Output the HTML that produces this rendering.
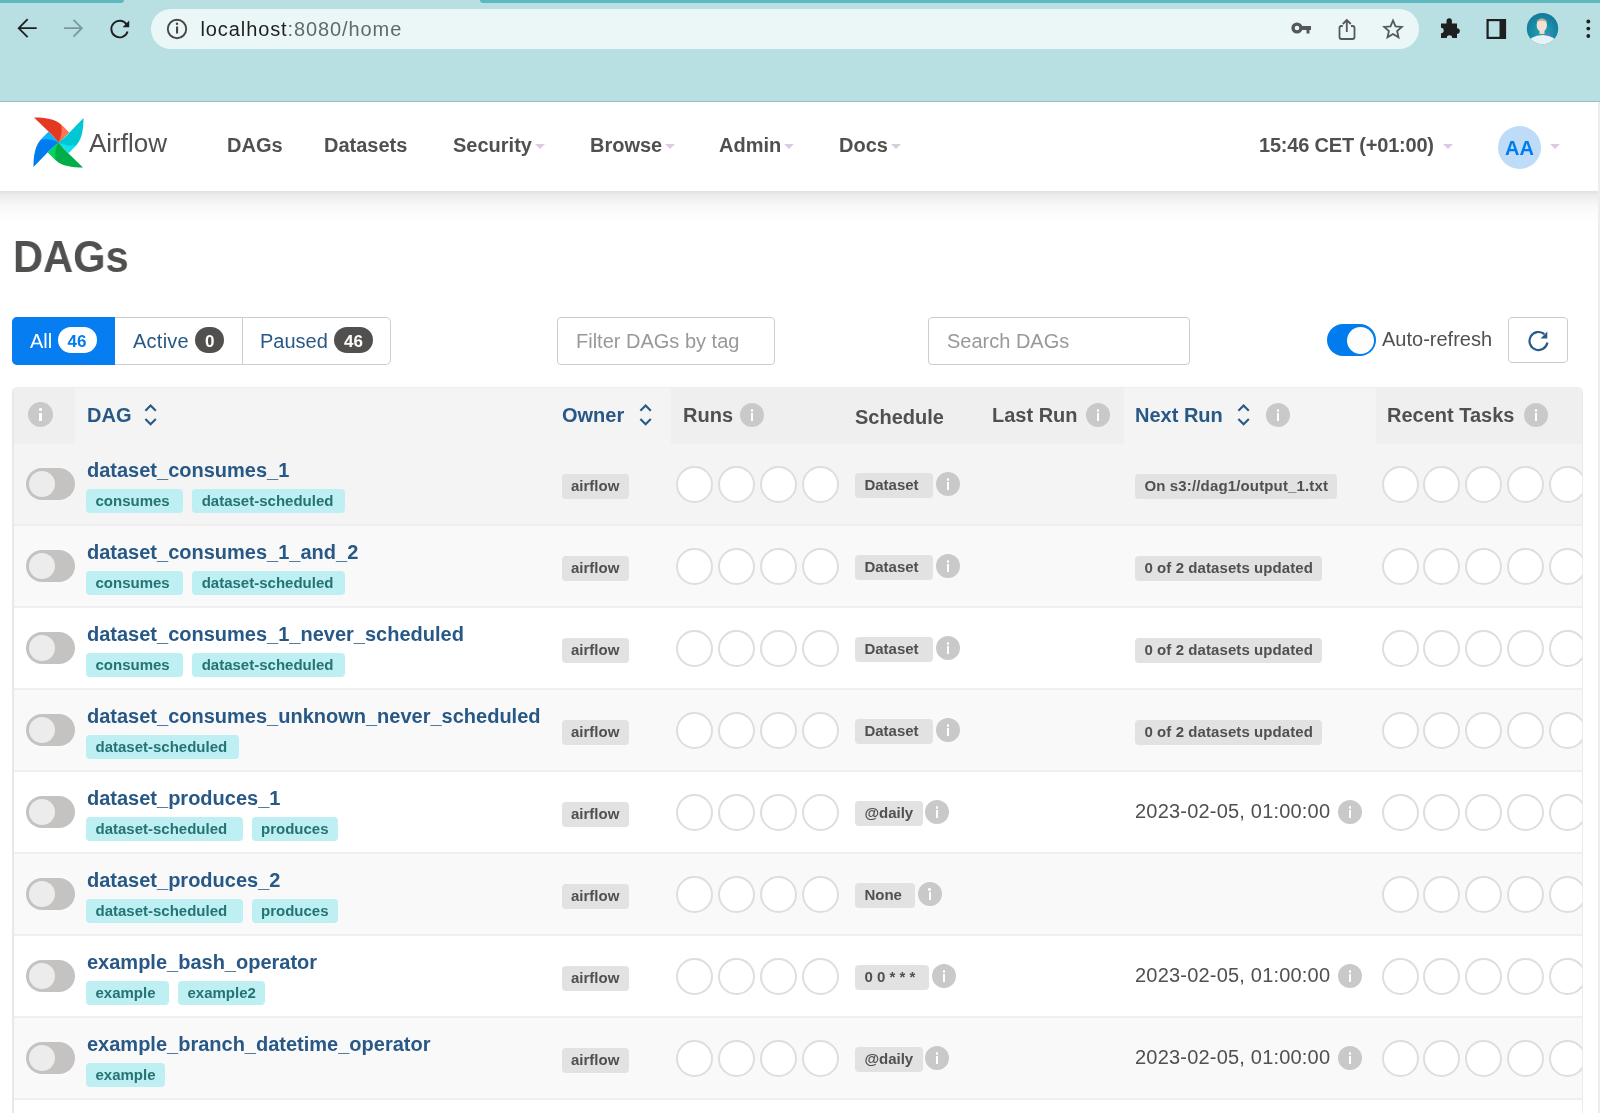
<!DOCTYPE html><html><head><meta charset="utf-8"><style>
*{margin:0;padding:0;box-sizing:border-box}
html,body{width:1600px;height:1113px;overflow:hidden;background:#fff;font-family:"Liberation Sans",sans-serif}
.a{position:absolute}
.t{position:absolute;white-space:nowrap;line-height:1}
.b{font-weight:bold}
.chrome{left:0;top:0;width:1600px;height:102px;background:#b8e0e2}
.strip{top:0;height:3px;background:#5db8c0}
.addr{left:151px;top:9px;width:1268px;height:40px;border-radius:20px;background:#ebf7f7}
.nav{left:0;top:102px;width:1598px;height:89px;background:#fff}
.shad{left:0;top:191px;width:1598px;height:32px;background:linear-gradient(#e1e1e1,#ebebeb 12%,#f3f3f3 30%,#f9f9f9 50%,#fcfcfc 70%,#fefefe 85%,#fff)}
.navt{font-size:20px;font-weight:bold;color:#51504f}
.caret{width:0;height:0;border-left:5.6px solid transparent;border-right:5.6px solid transparent;border-top:5.6px solid #dccbe0}
.info{border-radius:50%;background:#c9c9c9}
.info::after{content:"";position:absolute;left:50%;top:43%;width:2.2px;height:34%;margin-left:-1.1px;background:#fff;}
.info::before{content:"";position:absolute;left:50%;top:25%;width:2.6px;height:2.6px;margin-left:-1.3px;background:#fff;border-radius:50%}
.tag{position:absolute;height:24px;border-radius:4px;background:#bdeff3;color:#257373;font-size:15px;font-weight:bold;line-height:23px;padding-left:9.5px;white-space:nowrap}
.bdg{position:absolute;height:25px;border-radius:4px;background:#e2e2e2;color:#51504f;font-size:15px;font-weight:bold;line-height:25px;padding-left:9px;white-space:nowrap}
.circ{position:absolute;width:37px;height:37px;border-radius:50%;background:#fff;border:2px solid #dedede}
.tog{position:absolute;width:49px;height:32px;border-radius:16px;background:#c4c3c2}
.tog::after{content:"";position:absolute;left:3px;top:3px;width:26px;height:26px;border-radius:50%;background:#ececec}
.dag{font-size:20px;font-weight:bold;color:#285886}
.hdr{font-size:20px;font-weight:bold;color:#51504f}
.hdrs{color:#285886}
.dt{font-size:20px;color:#51504f}
</style></head><body><div style="position:absolute;left:0;top:0;width:1600px;height:1113px;overflow:hidden;will-change:transform"><div class="a chrome"></div>
<div class="a strip" style="left:0;width:124px;border-bottom-right-radius:3px"></div>
<div class="a strip" style="left:480px;width:1120px;border-bottom-left-radius:3px"></div>
<div class="a" style="left:0;top:101px;width:1600px;height:1px;background:#9dbfc1"></div>
<div class="a addr"></div>
<svg class="a" style="left:0;top:0" width="1600" height="60" viewBox="0 0 1600 60">
<g fill="none" stroke="#1f1f1f" stroke-width="1.8" stroke-linecap="square">
<path d="M35.8 28.2H19.5M27 19.8L18.7 28.2L27 36.6"/>
</g>
<g fill="none" stroke="#7c9899" stroke-width="1.8">
<path d="M64 28.2H81.5M73.5 19.8L81.8 28.2L73.5 36.6"/>
</g>
<g fill="none" stroke="#1f1f1f" stroke-width="1.9">
<path d="M126.8 24.8A8.3 8.3 0 1 0 127.6 31.5"/>
</g>
<path d="M129.2 20.6V27.2H122.6Z" fill="#1f1f1f"/>
<circle cx="177" cy="29" r="9.2" fill="none" stroke="#474747" stroke-width="1.9"/>
<rect x="176" y="26.5" width="2.1" height="7" fill="#474747"/><circle cx="177" cy="23.8" r="1.25" fill="#474747"/>
<g fill="#555759"><circle cx="1297" cy="28" r="5.6"/><rect x="1300" y="26" width="11" height="4"/><rect x="1306.5" y="28" width="3" height="5.5"/></g>
<circle cx="1297" cy="28" r="2.3" fill="#ebf7f7"/>
<g fill="none" stroke="#555759" stroke-width="1.8"><path d="M1342.8 26H1341.5A2 2 0 0 0 1339.5 28V37A2 2 0 0 0 1341.5 39H1352.5A2 2 0 0 0 1354.5 37V28A2 2 0 0 0 1352.5 26H1351"/><path d="M1346.8 32V20M1342.8 24L1346.8 20L1350.8 24"/></g>
<path d="M1393 20.5L1395.5 26.4L1401.8 26.9L1397.1 31.1L1398.5 37.3L1393 34L1387.5 37.3L1388.9 31.1L1384.2 26.9L1390.5 26.4Z" fill="none" stroke="#555759" stroke-width="1.8" stroke-linejoin="miter"/>
<path d="M1441 23.5H1446.5V21A2.7 2.7 0 0 1 1451.9 21V23.5H1457V28.2A2.8 2.8 0 0 1 1457 33.8V38H1452.2A2.7 2.7 0 0 0 1446.8 38H1441V33.2A2.7 2.7 0 0 0 1441 27.8Z" fill="#1f1f1f"/>
<rect x="1487.6" y="20.1" width="17.4" height="17.8" fill="none" stroke="#1f1f1f" stroke-width="2.2"/>
<rect x="1499.5" y="20" width="5.5" height="18" fill="#1f1f1f"/>
<defs><radialGradient id="avg" cx="0.5" cy="0.6" r="0.6"><stop offset="0" stop-color="#22a7b4"/><stop offset="1" stop-color="#12789a"/></radialGradient>
<clipPath id="avc"><circle cx="1542.5" cy="28.6" r="15.7"/></clipPath></defs>
<circle cx="1542.5" cy="28.6" r="15.7" fill="url(#avg)"/>
<g clip-path="url(#avc)">
<ellipse cx="1542.5" cy="44.5" rx="15" ry="9.5" fill="#e6f2f6"/><rect x="1539.5" y="29" width="5" height="5" fill="#f0d8c8"/>
<ellipse cx="1541.8" cy="25" rx="5.2" ry="6.6" fill="#f4e0d4"/>
<path d="M1536.6 22.5C1537 17.5 1546.5 17.5 1547 22.5C1545 20 1538.5 20 1536.6 22.5Z" fill="#c9a58d"/>
<circle cx="1548.5" cy="34.5" r="1.6" fill="#8a66d6"/>
</g>
<g fill="#1f1f1f"><circle cx="1588.3" cy="21.5" r="1.9"/><circle cx="1588.3" cy="28.6" r="1.9"/><circle cx="1588.3" cy="36" r="1.9"/></g>
</svg>
<div class="t" style="left:200.5px;top:19px;font-size:20px;letter-spacing:0.9px;color:#1f1f1f">localhost<span style="color:#5f6a6b">:8080/home</span></div>
<div class="a shad"></div>
<div class="a nav"></div>
<div class="a" style="left:1598.3px;top:102px;width:1.7px;height:1011px;background:#ededed"></div>
<svg class="a" style="left:33px;top:117px" width="52" height="51" viewBox="0 0 52 51">
<defs><g id="bl"><path d="M1 0.5C12 0.5 22 2 28 7.5L36 15.5L25.5 25.5C22 21 18 17 15.5 14.5Z" fill="var(--c1)"/>
<path d="M28 7.5L36 15.5L25.5 25.5C28.5 20 29.5 13 28 7.5Z" fill="var(--c2)"/></g></defs>
<use href="#bl" style="--c1:#e43921;--c2:#ff7557"/>
<use href="#bl" transform="rotate(90 25.5 25.5)" style="--c1:#00c7d4;--c2:#11e1ee"/>
<use href="#bl" transform="rotate(180 25.5 25.5)" style="--c1:#00ad46;--c2:#04d659"/>
<use href="#bl" transform="rotate(270 25.5 25.5)" style="--c1:#017cee;--c2:#0cb6ff"/>
</svg>
<div class="t" style="left:89px;top:130px;font-size:26px;color:#51504f">Airflow</div>
<div class="t navt" style="left:227px;top:135px">DAGs</div>
<div class="t navt" style="left:324px;top:135px">Datasets</div>
<div class="t navt" style="left:453px;top:135px">Security</div>
<div class="t navt" style="left:590px;top:135px">Browse</div>
<div class="t navt" style="left:719px;top:135px">Admin</div>
<div class="t navt" style="left:839px;top:135px">Docs</div>
<div class="a caret" style="left:535px;top:144px"></div>
<div class="a caret" style="left:665px;top:144px"></div>
<div class="a caret" style="left:784px;top:144px"></div>
<div class="a caret" style="left:891px;top:144px"></div>
<div class="t navt" style="left:1259px;top:135px;letter-spacing:-0.2px">15:46 CET (+01:00)</div>
<div class="a caret" style="left:1443.3px;top:144.4px"></div>
<div class="a" style="left:1498px;top:126px;width:43px;height:43px;border-radius:50%;background:#bedcf7"></div>
<div class="t b" style="left:1505px;top:137.5px;font-size:20px;color:#017cee">AA</div>
<div class="a caret" style="left:1549.7px;top:144.4px"></div>
<div class="t b" style="left:13px;top:234px;font-size:45px;color:#51504f;transform:scaleX(0.925);transform-origin:0 0">DAGs</div>
<div class="a" style="left:12px;top:317px;width:379px;height:48px;border:1.5px solid #cdcdcd;border-radius:5px"></div>
<div class="a" style="left:12px;top:317px;width:102.5px;height:48px;background:#067df0;border-radius:5px 0 0 5px"></div>
<div class="a" style="left:241.7px;top:317px;width:1.3px;height:48px;background:#cdcdcd"></div>
<div class="t" style="left:30px;top:331px;font-size:20px;color:#fff">All</div>
<div class="a" style="left:58px;top:327px;width:39px;height:26px;border-radius:13px;background:#fff"></div>
<div class="t b" style="left:67.5px;top:333px;font-size:17px;color:#017cee">46</div>
<div class="t" style="left:133px;top:331px;font-size:20px;letter-spacing:0.25px;color:#285886">Active</div>
<div class="a" style="left:195px;top:327px;width:29px;height:26px;border-radius:13px;background:#51504f"></div>
<div class="t b" style="left:205px;top:333px;font-size:17px;color:#fff">0</div>
<div class="t" style="left:260px;top:331px;font-size:20px;color:#285886">Paused</div>
<div class="a" style="left:334px;top:327px;width:39px;height:26px;border-radius:13px;background:#51504f"></div>
<div class="t b" style="left:344px;top:333px;font-size:17px;color:#fff">46</div>
<div class="a" style="left:557px;top:317px;width:218px;height:48px;border:1.5px solid #cdcdcd;border-radius:4px"></div>
<div class="t" style="left:576px;top:331px;font-size:20px;color:#999">Filter DAGs by tag</div>
<div class="a" style="left:928px;top:317px;width:262px;height:48px;border:1.5px solid #cdcdcd;border-radius:4px"></div>
<div class="t" style="left:947px;top:331px;font-size:20px;color:#999">Search DAGs</div>
<div class="a" style="left:1327px;top:324px;width:49px;height:32px;border-radius:16px;background:#017cee"></div>
<div class="a" style="left:1347px;top:326.5px;width:27px;height:27px;border-radius:50%;background:#fdfdfd"></div>
<div class="t" style="left:1382px;top:329px;font-size:20px;color:#51504f">Auto-refresh</div>
<div class="a" style="left:1508px;top:317px;width:60px;height:46px;border:1.5px solid #cdcdcd;border-radius:4px"></div>
<svg class="a" style="left:1526px;top:328px" width="24" height="24" viewBox="0 0 24 24"><path d="M18.3 6.1A9 9 0 1 0 21.4 14.5" fill="none" stroke="#2a5a88" stroke-width="2.2"/><path d="M21.3 3.6V10.4H14.5Z" fill="#2a5a88"/></svg>
<div class="a" style="left:12px;top:386.5px;width:1571px;height:727px;overflow:hidden;border-radius:5px 5px 0 0;background:#fff;border-left:2px solid #e8e8e8;border-top:1px solid #ededed">
<div class="a" style="left:-14px;top:-387.5px;width:1600px;height:1113px">
<div class="a" style="left:14px;top:387.5px;width:1568px;height:56px;background:#f4f4f4"></div>
<div class="a" style="left:14px;top:387.5px;width:61px;height:56px;background:#efefef"></div>
<div class="a" style="left:671px;top:387.5px;width:453px;height:56px;background:#efefef"></div>
<div class="a" style="left:1376px;top:387.5px;width:206px;height:56px;background:#efefef"></div>
<div class="a info" style="left:28px;top:402px;width:25px;height:25px"></div>
<div class="t hdr hdrs" style="left:87px;top:404.5px">DAG</div>
<div class="t hdr hdrs" style="left:562px;top:404.5px">Owner</div>
<div class="t hdr" style="left:683px;top:404.5px">Runs</div>
<div class="a info" style="left:740px;top:403px;width:24px;height:24px"></div>
<div class="t hdr" style="left:855px;top:406.5px">Schedule</div>
<div class="t hdr" style="left:992px;top:404.5px">Last Run</div>
<div class="a info" style="left:1086px;top:403px;width:24px;height:24px"></div>
<div class="t hdr hdrs" style="left:1135px;top:404.5px">Next Run</div>
<div class="a info" style="left:1266px;top:403px;width:24px;height:24px"></div>
<div class="t hdr" style="left:1387px;top:404.5px">Recent Tasks</div>
<div class="a info" style="left:1524px;top:403px;width:24px;height:24px"></div>
<svg class="a" style="left:144px;top:403px" width="14" height="24" viewBox="0 0 14 24"><path d="M1.4 7.7L6.6 2.5L11.8 7.7M1.4 16.1L6.6 21.3L11.8 16.1" fill="none" stroke="#285886" stroke-width="2.1"/></svg>
<svg class="a" style="left:639px;top:403px" width="14" height="24" viewBox="0 0 14 24"><path d="M1.4 7.7L6.6 2.5L11.8 7.7M1.4 16.1L6.6 21.3L11.8 16.1" fill="none" stroke="#285886" stroke-width="2.1"/></svg>
<svg class="a" style="left:1237px;top:403px" width="14" height="24" viewBox="0 0 14 24"><path d="M1.4 7.7L6.6 2.5L11.8 7.7M1.4 16.1L6.6 21.3L11.8 16.1" fill="none" stroke="#285886" stroke-width="2.1"/></svg>
<div class="a" style="left:14px;top:443.5px;width:1568px;height:82px;background:#f4f4f4;border-bottom:2px solid #efefef"></div>
<div class="tog" style="left:26px;top:468px"></div>
<div class="t dag" style="left:87px;top:460px">dataset_consumes_1</div>
<div class="tag" style="left:86.0px;top:489px;width:97.2px">consumes</div>
<div class="tag" style="left:192.2px;top:489px;width:152.5px">dataset-scheduled</div>
<div class="bdg" style="left:562px;top:474px;width:66.8px;line-height:23px">airflow</div>
<div class="circ" style="left:676.3px;top:465.5px"></div>
<div class="circ" style="left:718.1px;top:465.5px"></div>
<div class="circ" style="left:759.9px;top:465.5px"></div>
<div class="circ" style="left:801.7px;top:465.5px"></div>
<div class="bdg" style="left:855.4px;top:472.5px;width:78.1px;line-height:23px">Dataset</div>
<div class="a info" style="left:936.1px;top:472px;width:24px;height:24px"></div>
<div class="bdg" style="left:1135.4px;top:474px;width:201.6px;line-height:23px;letter-spacing:0.15px">On s3://dag1/output_1.txt</div>
<div class="circ" style="left:1381.5px;top:465.5px"></div>
<div class="circ" style="left:1423.3px;top:465.5px"></div>
<div class="circ" style="left:1465.1px;top:465.5px"></div>
<div class="circ" style="left:1506.9px;top:465.5px"></div>
<div class="circ" style="left:1548.7px;top:465.5px"></div>
<div class="a" style="left:14px;top:525.5px;width:1568px;height:82px;background:#f9f9f9;border-bottom:2px solid #efefef"></div>
<div class="tog" style="left:26px;top:550px"></div>
<div class="t dag" style="left:87px;top:542px">dataset_consumes_1_and_2</div>
<div class="tag" style="left:86.0px;top:571px;width:97.2px">consumes</div>
<div class="tag" style="left:192.2px;top:571px;width:152.5px">dataset-scheduled</div>
<div class="bdg" style="left:562px;top:556px;width:66.8px;line-height:23px">airflow</div>
<div class="circ" style="left:676.3px;top:547.5px"></div>
<div class="circ" style="left:718.1px;top:547.5px"></div>
<div class="circ" style="left:759.9px;top:547.5px"></div>
<div class="circ" style="left:801.7px;top:547.5px"></div>
<div class="bdg" style="left:855.4px;top:554.5px;width:78.1px;line-height:23px">Dataset</div>
<div class="a info" style="left:936.1px;top:554px;width:24px;height:24px"></div>
<div class="bdg" style="left:1135.4px;top:556px;width:186.6px;line-height:23px;letter-spacing:0.08px">0 of 2 datasets updated</div>
<div class="circ" style="left:1381.5px;top:547.5px"></div>
<div class="circ" style="left:1423.3px;top:547.5px"></div>
<div class="circ" style="left:1465.1px;top:547.5px"></div>
<div class="circ" style="left:1506.9px;top:547.5px"></div>
<div class="circ" style="left:1548.7px;top:547.5px"></div>
<div class="a" style="left:14px;top:607.5px;width:1568px;height:82px;background:#ffffff;border-bottom:2px solid #efefef"></div>
<div class="tog" style="left:26px;top:632px"></div>
<div class="t dag" style="left:87px;top:624px">dataset_consumes_1_never_scheduled</div>
<div class="tag" style="left:86.0px;top:653px;width:97.2px">consumes</div>
<div class="tag" style="left:192.2px;top:653px;width:152.5px">dataset-scheduled</div>
<div class="bdg" style="left:562px;top:638px;width:66.8px;line-height:23px">airflow</div>
<div class="circ" style="left:676.3px;top:629.5px"></div>
<div class="circ" style="left:718.1px;top:629.5px"></div>
<div class="circ" style="left:759.9px;top:629.5px"></div>
<div class="circ" style="left:801.7px;top:629.5px"></div>
<div class="bdg" style="left:855.4px;top:636.5px;width:78.1px;line-height:23px">Dataset</div>
<div class="a info" style="left:936.1px;top:636px;width:24px;height:24px"></div>
<div class="bdg" style="left:1135.4px;top:638px;width:186.6px;line-height:23px;letter-spacing:0.08px">0 of 2 datasets updated</div>
<div class="circ" style="left:1381.5px;top:629.5px"></div>
<div class="circ" style="left:1423.3px;top:629.5px"></div>
<div class="circ" style="left:1465.1px;top:629.5px"></div>
<div class="circ" style="left:1506.9px;top:629.5px"></div>
<div class="circ" style="left:1548.7px;top:629.5px"></div>
<div class="a" style="left:14px;top:689.5px;width:1568px;height:82px;background:#f9f9f9;border-bottom:2px solid #efefef"></div>
<div class="tog" style="left:26px;top:714px"></div>
<div class="t dag" style="left:87px;top:706px">dataset_consumes_unknown_never_scheduled</div>
<div class="tag" style="left:86.0px;top:735px;width:152.5px">dataset-scheduled</div>
<div class="bdg" style="left:562px;top:720px;width:66.8px;line-height:23px">airflow</div>
<div class="circ" style="left:676.3px;top:711.5px"></div>
<div class="circ" style="left:718.1px;top:711.5px"></div>
<div class="circ" style="left:759.9px;top:711.5px"></div>
<div class="circ" style="left:801.7px;top:711.5px"></div>
<div class="bdg" style="left:855.4px;top:718.5px;width:78.1px;line-height:23px">Dataset</div>
<div class="a info" style="left:936.1px;top:718px;width:24px;height:24px"></div>
<div class="bdg" style="left:1135.4px;top:720px;width:186.6px;line-height:23px;letter-spacing:0.08px">0 of 2 datasets updated</div>
<div class="circ" style="left:1381.5px;top:711.5px"></div>
<div class="circ" style="left:1423.3px;top:711.5px"></div>
<div class="circ" style="left:1465.1px;top:711.5px"></div>
<div class="circ" style="left:1506.9px;top:711.5px"></div>
<div class="circ" style="left:1548.7px;top:711.5px"></div>
<div class="a" style="left:14px;top:771.5px;width:1568px;height:82px;background:#ffffff;border-bottom:2px solid #efefef"></div>
<div class="tog" style="left:26px;top:796px"></div>
<div class="t dag" style="left:87px;top:788px">dataset_produces_1</div>
<div class="tag" style="left:86.0px;top:817px;width:156.5px">dataset-scheduled</div>
<div class="tag" style="left:251.5px;top:817px;width:86.5px">produces</div>
<div class="bdg" style="left:562px;top:802px;width:66.8px;line-height:23px">airflow</div>
<div class="circ" style="left:676.3px;top:793.5px"></div>
<div class="circ" style="left:718.1px;top:793.5px"></div>
<div class="circ" style="left:759.9px;top:793.5px"></div>
<div class="circ" style="left:801.7px;top:793.5px"></div>
<div class="bdg" style="left:855.4px;top:800.5px;width:67.2px;line-height:23px">@daily</div>
<div class="a info" style="left:925.2px;top:800px;width:24px;height:24px"></div>
<div class="t dt" style="left:1135px;top:801px;letter-spacing:0.2px">2023-02-05, 01:00:00</div>
<div class="a info" style="left:1338px;top:800px;width:24px;height:24px"></div>
<div class="circ" style="left:1381.5px;top:793.5px"></div>
<div class="circ" style="left:1423.3px;top:793.5px"></div>
<div class="circ" style="left:1465.1px;top:793.5px"></div>
<div class="circ" style="left:1506.9px;top:793.5px"></div>
<div class="circ" style="left:1548.7px;top:793.5px"></div>
<div class="a" style="left:14px;top:853.5px;width:1568px;height:82px;background:#f9f9f9;border-bottom:2px solid #efefef"></div>
<div class="tog" style="left:26px;top:878px"></div>
<div class="t dag" style="left:87px;top:870px">dataset_produces_2</div>
<div class="tag" style="left:86.0px;top:899px;width:156.5px">dataset-scheduled</div>
<div class="tag" style="left:251.5px;top:899px;width:86.5px">produces</div>
<div class="bdg" style="left:562px;top:884px;width:66.8px;line-height:23px">airflow</div>
<div class="circ" style="left:676.3px;top:875.5px"></div>
<div class="circ" style="left:718.1px;top:875.5px"></div>
<div class="circ" style="left:759.9px;top:875.5px"></div>
<div class="circ" style="left:801.7px;top:875.5px"></div>
<div class="bdg" style="left:855.4px;top:882.5px;width:59.7px;line-height:23px">None</div>
<div class="a info" style="left:917.7px;top:882px;width:24px;height:24px"></div>
<div class="circ" style="left:1381.5px;top:875.5px"></div>
<div class="circ" style="left:1423.3px;top:875.5px"></div>
<div class="circ" style="left:1465.1px;top:875.5px"></div>
<div class="circ" style="left:1506.9px;top:875.5px"></div>
<div class="circ" style="left:1548.7px;top:875.5px"></div>
<div class="a" style="left:14px;top:935.5px;width:1568px;height:82px;background:#ffffff;border-bottom:2px solid #efefef"></div>
<div class="tog" style="left:26px;top:960px"></div>
<div class="t dag" style="left:87px;top:952px">example_bash_operator</div>
<div class="tag" style="left:86.0px;top:981px;width:83.0px">example</div>
<div class="tag" style="left:178.0px;top:981px;width:87.4px">example2</div>
<div class="bdg" style="left:562px;top:966px;width:66.8px;line-height:23px">airflow</div>
<div class="circ" style="left:676.3px;top:957.5px"></div>
<div class="circ" style="left:718.1px;top:957.5px"></div>
<div class="circ" style="left:759.9px;top:957.5px"></div>
<div class="circ" style="left:801.7px;top:957.5px"></div>
<div class="bdg" style="left:855.4px;top:964.5px;width:73.9px;line-height:23px">0 0 * * *</div>
<div class="a info" style="left:931.9px;top:964px;width:24px;height:24px"></div>
<div class="t dt" style="left:1135px;top:965px;letter-spacing:0.2px">2023-02-05, 01:00:00</div>
<div class="a info" style="left:1338px;top:964px;width:24px;height:24px"></div>
<div class="circ" style="left:1381.5px;top:957.5px"></div>
<div class="circ" style="left:1423.3px;top:957.5px"></div>
<div class="circ" style="left:1465.1px;top:957.5px"></div>
<div class="circ" style="left:1506.9px;top:957.5px"></div>
<div class="circ" style="left:1548.7px;top:957.5px"></div>
<div class="a" style="left:14px;top:1017.5px;width:1568px;height:82px;background:#f9f9f9;border-bottom:2px solid #efefef"></div>
<div class="tog" style="left:26px;top:1042px"></div>
<div class="t dag" style="left:87px;top:1034px">example_branch_datetime_operator</div>
<div class="tag" style="left:86.0px;top:1063px;width:79.0px">example</div>
<div class="bdg" style="left:562px;top:1048px;width:66.8px;line-height:23px">airflow</div>
<div class="circ" style="left:676.3px;top:1039.5px"></div>
<div class="circ" style="left:718.1px;top:1039.5px"></div>
<div class="circ" style="left:759.9px;top:1039.5px"></div>
<div class="circ" style="left:801.7px;top:1039.5px"></div>
<div class="bdg" style="left:855.4px;top:1046.5px;width:67.2px;line-height:23px">@daily</div>
<div class="a info" style="left:925.2px;top:1046px;width:24px;height:24px"></div>
<div class="t dt" style="left:1135px;top:1047px;letter-spacing:0.2px">2023-02-05, 01:00:00</div>
<div class="a info" style="left:1338px;top:1046px;width:24px;height:24px"></div>
<div class="circ" style="left:1381.5px;top:1039.5px"></div>
<div class="circ" style="left:1423.3px;top:1039.5px"></div>
<div class="circ" style="left:1465.1px;top:1039.5px"></div>
<div class="circ" style="left:1506.9px;top:1039.5px"></div>
<div class="circ" style="left:1548.7px;top:1039.5px"></div>
<div class="a" style="left:14px;top:1099.5px;width:1568px;height:82px;background:#ffffff;border-bottom:2px solid #efefef"></div>
<div class="tog" style="left:26px;top:1124px"></div>
<div class="t dag" style="left:87px;top:1116px">example_branch_dop_operator_v3</div>
<div class="tag" style="left:86.0px;top:1145px;width:79.0px">example</div>
<div class="bdg" style="left:562px;top:1130px;width:66.8px;line-height:23px">airflow</div>
<div class="circ" style="left:676.3px;top:1121.5px"></div>
<div class="circ" style="left:718.1px;top:1121.5px"></div>
<div class="circ" style="left:759.9px;top:1121.5px"></div>
<div class="circ" style="left:801.7px;top:1121.5px"></div>
<div class="bdg" style="left:855.4px;top:1128.5px;width:81.4px;line-height:23px">*/1 * * * *</div>
<div class="a info" style="left:939.4px;top:1128px;width:24px;height:24px"></div>
<div class="t dt" style="left:1135px;top:1129px;letter-spacing:0.2px">2023-02-05, 01:00:00</div>
<div class="a info" style="left:1338px;top:1128px;width:24px;height:24px"></div>
<div class="circ" style="left:1381.5px;top:1121.5px"></div>
<div class="circ" style="left:1423.3px;top:1121.5px"></div>
<div class="circ" style="left:1465.1px;top:1121.5px"></div>
<div class="circ" style="left:1506.9px;top:1121.5px"></div>
<div class="circ" style="left:1548.7px;top:1121.5px"></div>
</div></div>
<div class="a" style="left:1581.5px;top:391px;width:1.5px;height:722px;background:#ebebeb"></div></div></body></html>
